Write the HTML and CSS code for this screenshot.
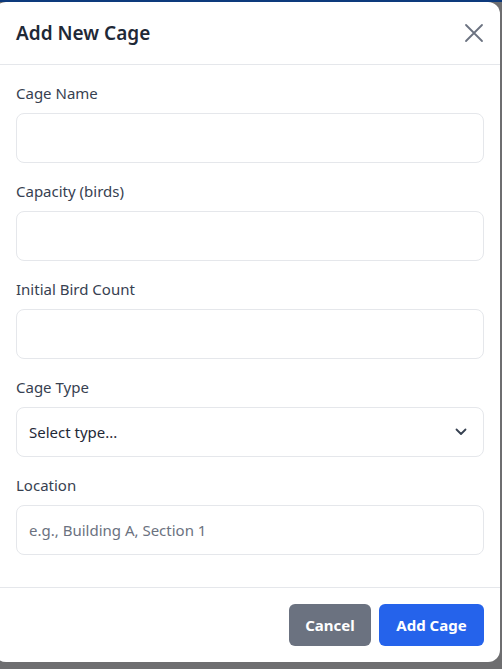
FILE: index.html
```html
<!DOCTYPE html>
<html lang="en">
<head>
<meta charset="utf-8">
<title>Add New Cage</title>
<link rel="stylesheet" href="styles.css">
</head>
<body>
<div class="page-strip"></div>
<div class="backdrop">
  <div class="modal">
    <div class="modal-header">
      <h2 class="modal-title">Add New Cage</h2>
      <button class="close-btn" aria-label="Close">
        <svg width="20" height="20" viewBox="0 0 20 20"><path d="M2 2 L18 18 M18 2 L2 18" stroke="#6b7280" stroke-width="1.8" stroke-linecap="round" fill="none"/></svg>
      </button>
    </div>
    <form class="modal-body">
      <div class="field">
        <label class="label">Cage Name</label>
        <input class="input" type="text">
      </div>
      <div class="field">
        <label class="label">Capacity (birds)</label>
        <input class="input" type="text">
      </div>
      <div class="field">
        <label class="label">Initial Bird Count</label>
        <input class="input" type="text">
      </div>
      <div class="field">
        <label class="label">Cage Type</label>
        <div class="select">
          <span>Select type...</span>
          <svg width="12" height="8" viewBox="0 0 12 8"><path d="M1.5 1.5 L6 6 L10.5 1.5" stroke="#374151" stroke-width="1.8" fill="none" stroke-linecap="round" stroke-linejoin="round"/></svg>
        </div>
      </div>
      <div class="field">
        <label class="label">Location</label>
        <input class="input" type="text" placeholder="e.g., Building A, Section 1">
      </div>
    </form>
    <div class="modal-footer">
      <button class="btn btn-cancel">Cancel</button>
      <button class="btn btn-primary">Add Cage</button>
    </div>
  </div>
</div>
</body>
</html>
```
FILE: styles.css
```css
* { box-sizing: border-box; }
html, body { margin: 0; padding: 0; }
body {
  width: 502px;
  height: 669px;
  overflow: hidden;
  background: #6e6e70;
  font-family: "Segoe UI", "Noto Sans", "Open Sans", sans-serif;
  position: relative;
}
.page-strip {
  height: 2px;
  background: #0d3a7c;
}
.backdrop {
  position: absolute;
  inset: 0;
}
.modal {
  position: absolute;
  top: 2px;
  left: -6px;
  width: 506px;
  height: 660px;
  background: #fff;
  border-radius: 12px;
  display: flex;
  flex-direction: column;
}
.modal-header {
  height: 63px;
  border-bottom: 1px solid #e5e7eb;
  display: flex;
  align-items: center;
  justify-content: space-between;
  padding: 0 16px 0 22px;
}
.modal-title {
  margin: 0;
  font-size: 19px;
  font-weight: 600;
  color: #1f2937;
}
.close-btn {
  border: 0;
  background: none;
  padding: 0;
  width: 20px;
  height: 20px;
  display: flex;
}
.modal-body {
  margin: 0;
  padding: 16px 16px 32px 22px;
  display: flex;
  flex-direction: column;
  gap: 16px;
  border-bottom: 1px solid #e5e7eb;
}
.field {
  display: flex;
  flex-direction: column;
  gap: 8px;
}
.label {
  font-size: 15px;
  line-height: 24px;
  color: #374151;
}
.input, .select {
  height: 50px;
  width: 100%;
  border: 1px solid #e5e7eb;
  border-radius: 8px;
  padding: 0 12px;
  font-family: inherit;
  font-size: 15px;
  color: #1f2937;
  background: #fff;
}
.input::placeholder { color: #6b7280; }
.select {
  display: flex;
  align-items: center;
  justify-content: space-between;
  padding: 0 16px 0 12px;
}
.modal-footer {
  flex: 1;
  display: flex;
  justify-content: flex-end;
  align-items: flex-start;
  gap: 8px;
  padding: 16px 16px 0 0;
}
.btn {
  height: 42px;
  border: 0;
  border-radius: 6px;
  padding: 0 16px;
  font-family: inherit;
  font-size: 15px;
  font-weight: 700;
  color: #fff;
}
.btn-cancel { background: #6b7280; width: 82px; }
.btn-primary { background: #2563eb; width: 105px; }
```
